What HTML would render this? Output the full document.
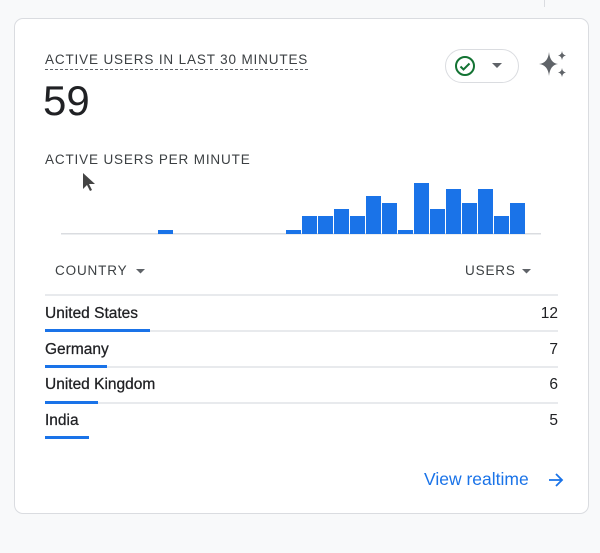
<!DOCTYPE html><html><head><style>
body{margin:0;width:600px;height:553px;background:#f8f9fa;font-family:"Liberation Sans",sans-serif;position:relative;overflow:hidden}
.card{position:absolute;left:14px;top:18px;width:573px;height:494px;background:#fff;border:1px solid #dadce0;border-radius:9px}
.a{position:absolute}
.lab{font-size:13.5px;letter-spacing:.85px;color:#3c4043}
.row{position:absolute;left:45px;width:513px;font-size:15.5px;color:#202124;-webkit-text-stroke:.25px #202124}
.row .v{position:absolute;right:0;top:0;-webkit-text-stroke:0}
.line{position:absolute;left:45px;width:513px;height:2px;background:#e8eaed}
.bl{position:absolute;left:45px;height:3px;background:#1a73e8}
</style></head><body>
<div class="a" style="left:544px;top:0;width:1px;height:7px;background:#dadce0"></div>
<div class="card"></div>
<div class="a lab" style="left:45px;top:52px;border-bottom:1px dashed #5f6368;padding-bottom:2px">ACTIVE USERS IN LAST 30 MINUTES</div>
<div class="a" style="left:43px;top:77px;font-size:42px;color:#202124">59</div>
<div class="a" style="left:445px;top:49px;width:72px;height:32px;border:1px solid #dadce0;border-radius:17px"></div>
<svg class="a" style="left:454px;top:55px" width="22" height="22" viewBox="0 0 22 22"><circle cx="11" cy="11" r="9" fill="none" stroke="#137333" stroke-width="2"/><path d="M6.5 11.5l3 3 6-6" fill="none" stroke="#137333" stroke-width="2"/></svg>
<svg class="a" style="left:491px;top:62px" width="12" height="7"><path d="M1 1h10L6 6z" fill="#5f6368"/></svg>
<svg class="a" style="left:538px;top:50px" width="30" height="30" viewBox="0 0 30 30"><path d="M11 2Q12 13 20 14Q12 15 11 26Q10 15 1 14Q10 13 11 2Z" fill="#5f6368"/><path d="M24 1Q24.5 5 28 5.5Q24.5 6 24 10Q23.5 6 20 5.5Q23.5 5 24 1Z" fill="#5f6368"/><path d="M24 18Q24.5 22 28 22.5Q24.5 23 24 27Q23.5 23 20 22.5Q23.5 22 24 18Z" fill="#5f6368"/></svg>
<div class="a lab" style="left:45px;top:152px">ACTIVE USERS PER MINUTE</div>
<svg class="a" style="left:82px;top:172px" width="14" height="22"><path d="M1 1v16l4-4 3 6 2-1-3-6h6z" fill="#444"/></svg>
<svg class="a" style="left:0;top:170px" width="600" height="70">
<rect x="61" y="63" width="480" height="1.5" fill="#dadce0"/>
<g fill="#1a73e8">
<rect x="158" y="60" width="15" height="4"/>
<rect x="286" y="60" width="15" height="4"/>
<rect x="302" y="46" width="15" height="18"/>
<rect x="318" y="46" width="15" height="18"/>
<rect x="334" y="39" width="15" height="25"/>
<rect x="350" y="46" width="15" height="18"/>
<rect x="366" y="26" width="15" height="38"/>
<rect x="382" y="33" width="15" height="31"/>
<rect x="398" y="60" width="15" height="4"/>
<rect x="414" y="13" width="15" height="51"/>
<rect x="430" y="39" width="15" height="25"/>
<rect x="446" y="19" width="15" height="45"/>
<rect x="462" y="33" width="15" height="31"/>
<rect x="478" y="19" width="15" height="45"/>
<rect x="494" y="46" width="15" height="18"/>
<rect x="510" y="33" width="15" height="31"/>
</g></svg>
<div class="a lab" style="left:55px;top:263px">COUNTRY</div>
<svg class="a" style="left:135px;top:268px" width="12" height="7"><path d="M1 1h9L5.5 5.5z" fill="#5f6368"/></svg>
<div class="a lab" style="left:465px;top:263px">USERS</div>
<svg class="a" style="left:521px;top:268px" width="12" height="7"><path d="M1 1h9L5.5 5.5z" fill="#5f6368"/></svg>
<div class="line" style="top:294px"></div>
<div class="row" style="top:305px">United States<span class="v">12</span></div>
<div class="line" style="top:330px"></div><div class="bl" style="top:329px;width:105px"></div>
<div class="row" style="top:341px">Germany<span class="v">7</span></div>
<div class="line" style="top:366px"></div><div class="bl" style="top:365px;width:62px"></div>
<div class="row" style="top:376px">United Kingdom<span class="v">6</span></div>
<div class="line" style="top:402px"></div><div class="bl" style="top:401px;width:53px"></div>
<div class="row" style="top:412px">India<span class="v">5</span></div>
<div class="bl" style="top:436px;width:44px"></div>
<div class="a" style="left:424px;top:469px;font-size:17.5px;color:#1a73e8">View realtime</div>
<svg class="a" style="left:547px;top:471px" width="18" height="18" viewBox="0 0 18 18"><path d="M2 9h13M9 3l6 6-6 6" fill="none" stroke="#1a73e8" stroke-width="1.8"/></svg>
</body></html>
